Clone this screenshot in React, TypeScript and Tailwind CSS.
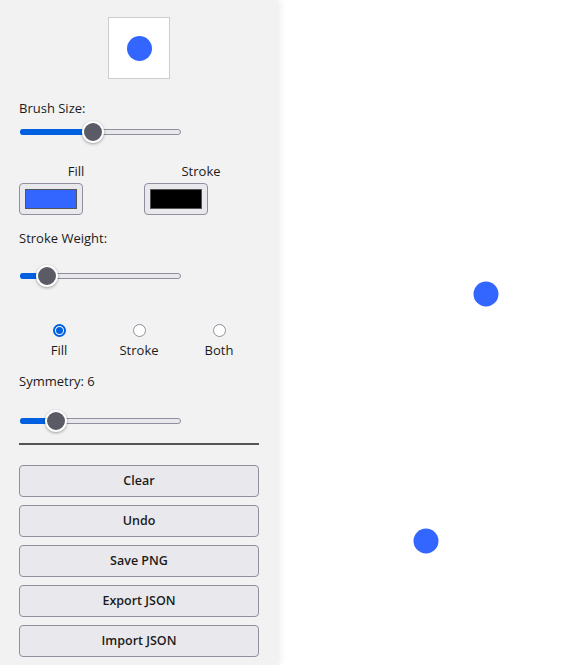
import React from "react";

const Slider = ({ pos }: { pos: number }) => {
  // pos = thumb centre, px from slider's left edge
  return (
    <div className="relative w-[162px] h-[20px]">
      <div className="absolute left-[1px] right-0 top-[8px] h-[6px] rounded-full border border-[#8f8f9d] bg-[#e9e9ed]" />
      <div
        className="absolute left-[1px] top-[8px] h-[6px] rounded-full bg-[#0060df]"
        style={{ width: pos }}
      />
      <div
        className="absolute top-0 w-[22px] h-[22px] rounded-full border-2 border-white bg-[#5b5b66] shadow-[0_1px_3px_rgba(0,0,0,0.35)]"
        style={{ left: pos - 11 }}
      />
    </div>
  );
};

const Radio = ({ label, checked }: { label: string; checked?: boolean }) => (
  <div className="flex flex-col items-center">
    {checked ? (
      <div className="w-[13px] h-[13px] rounded-full border-[2px] border-[#0060df] bg-white flex items-center justify-center">
        <div className="w-[7px] h-[7px] rounded-full bg-[#0060df]" />
      </div>
    ) : (
      <div className="w-[13px] h-[13px] rounded-full border border-[#8f8f9d] bg-white" />
    )}
    <span className="mt-[4px] leading-[18px]">{label}</span>
  </div>
);

const buttons = ["Clear", "Undo", "Save PNG", "Export JSON", "Import JSON"];

export default function App() {
  return (
    <div
      className="flex w-[568px] h-[665px] overflow-hidden text-[13px] text-[#1b1b1b]"
      style={{ fontFamily: '"Open Sans", "Noto Sans", sans-serif' }}
    >
      <aside className="relative z-10 w-[278px] shrink-0 h-full bg-[#f2f2f2] px-[19px] flex flex-col shadow-[2px_0_7px_rgba(0,0,0,0.08)]">
        <div className="mt-[17px] self-center w-[62px] h-[62px] border border-[#cccccc] bg-white flex items-center justify-center">
          <div className="w-[25px] h-[25px] rounded-full bg-[#3366ff]" />
        </div>

        <div className="mt-[20px] leading-[18px]">Brush Size:</div>
        <div className="mt-[4px]">
          <Slider pos={74} />
        </div>

        <div className="mt-[21px] grid grid-cols-[114px_114px] gap-x-[11px]">
          <div className="text-center leading-[18px]">Fill</div>
          <div className="text-center leading-[18px]">Stroke</div>
          <div className="mt-[3px] w-[64px] h-[32px] rounded-[4px] border border-[#8f8f9d] bg-[#e9e9ed] p-[5px]">
            <div className="w-full h-full border border-[#555] bg-[#3366ff]" />
          </div>
          <div className="mt-[3px] w-[64px] h-[32px] rounded-[4px] border border-[#8f8f9d] bg-[#e9e9ed] p-[5px]">
            <div className="w-full h-full border border-[#555] bg-black" />
          </div>
        </div>

        <div className="mt-[14px] leading-[18px]">Stroke Weight:</div>
        <div className="mt-[18px]">
          <Slider pos={28} />
        </div>

        <div className="mt-[39px] grid grid-cols-3">
          <Radio label="Fill" checked />
          <Radio label="Stroke" />
          <Radio label="Both" />
        </div>

        <div className="mt-[13px] leading-[18px]">Symmetry: 6</div>
        <div className="mt-[20px]">
          <Slider pos={37} />
        </div>

        <div className="mt-[13px] h-[2px] bg-[#555555]" />

        <div className="mt-[20px] flex flex-col gap-[8px]">
          {buttons.map((b) => (
            <button
              key={b}
              className="h-[32px] w-full rounded-[4px] border border-[#8f8f9d] bg-[#e9e9ed] pt-[1px] text-[12.5px] font-semibold text-[#1b1b1b]"
            >
              {b}
            </button>
          ))}
        </div>
      </aside>

      <main className="flex-1 h-full bg-white">
        <svg width="290" height="665" className="block">
          <circle cx="208" cy="294" r="12.5" fill="#3366ff" />
          <circle cx="148" cy="541" r="12.5" fill="#3366ff" />
        </svg>
      </main>
    </div>
  );
}
